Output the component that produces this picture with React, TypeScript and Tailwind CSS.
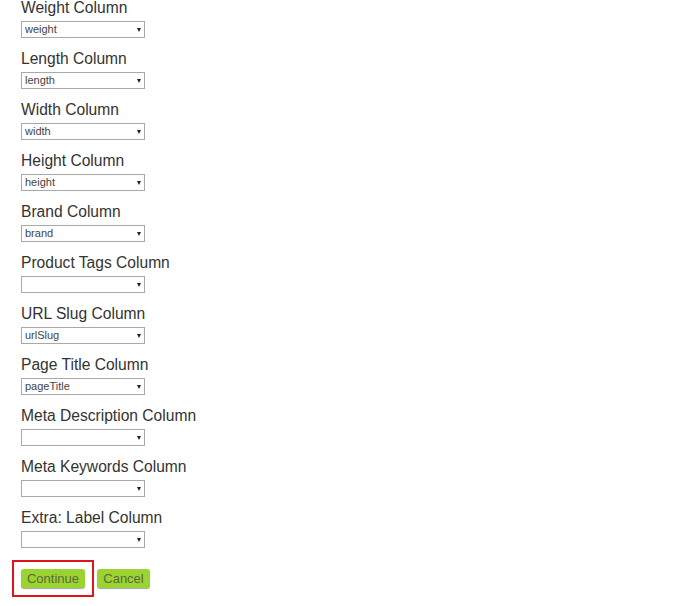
import React from 'react'

const columns = [
    { label: 'Weight Column', value: 'weight' },
    { label: 'Length Column', value: 'length' },
    { label: 'Width Column', value: 'width' },
    { label: 'Height Column', value: 'height' },
    { label: 'Brand Column', value: 'brand' },
    { label: 'Product Tags Column', value: '' },
    { label: 'URL Slug Column', value: 'urlSlug' },
    { label: 'Page Title Column', value: 'pageTitle' },
    { label: 'Meta Description Column', value: '' },
    { label: 'Meta Keywords Column', value: '' },
    { label: 'Extra: Label Column', value: '' },
]

const ColumnSelect = ({ value }: { value: string }) => (
    <div className="relative flex w-[124px] h-[17px]">
        <select
            defaultValue={value}
            className="block appearance-none w-full h-[17px] border border-[#a9a9a9] bg-white pl-[3px] text-[11px] leading-[15px] text-[#444] outline-none rounded-none"
        >
            <option value={value}>{value}</option>
        </select>
        {/* arrow */}
        <span className="absolute right-[4px] top-[7px] w-0 h-0 border-l-[2.5px] border-r-[2.5px] border-t-[4px] border-l-transparent border-r-transparent border-t-[#222] pointer-events-none" />
    </div>
)

const App = () => {
    return (
        <div className="w-[688px] h-[606px] bg-white overflow-hidden font-['Liberation_Sans',Arial,sans-serif]">
            <div className="flex flex-col pl-[21px] pt-0 mt-[-1px]">
                {columns.map((col) => (
                    <div key={col.label} className="flex flex-col h-[51px]">
                        <div className="text-[15.6px] leading-[18px] h-[18px] text-[#333]">{col.label}</div>
                        <div className="mt-[4px]">
                            <ColumnSelect value={col.value} />
                        </div>
                    </div>
                ))}
            </div>

            {/* Buttons */}
            <div className="flex items-center pl-[12px] mt-0">
                <div className="flex border-2 border-[#e0141b] p-[7px]">
                    <button className="block w-[64px] h-[19px] rounded-[3px] bg-[#9ad332] text-[13px] leading-[19px] text-[#5a6a3a] shadow-[0_1px_1px_rgba(0,0,0,0.35)]">
                        Continue
                    </button>
                </div>
                <button className="block ml-[3px] w-[53px] h-[19px] rounded-[3px] bg-[#9ad332] text-[13px] leading-[19px] text-[#5a6a3a] shadow-[0_1px_1px_rgba(0,0,0,0.35)]">
                    Cancel
                </button>
            </div>
        </div>
    )
}

export default App
